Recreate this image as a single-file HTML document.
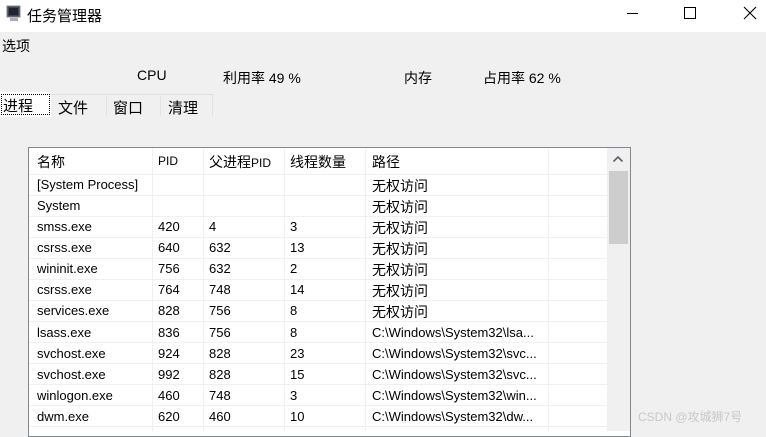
<!DOCTYPE html>
<html><head><meta charset="utf-8"><style>
*{margin:0;padding:0;box-sizing:border-box}
body{width:766px;height:431px;overflow:hidden;background:#f0f0f0;position:relative;font-family:"Liberation Sans","Noto Sans CJK SC",sans-serif;color:#000}
.a{position:absolute;white-space:nowrap}
#title{left:0;top:0;width:766px;height:32px;background:#fff}
.cell{position:absolute;font-size:13px;white-space:nowrap}
.hl{position:absolute;height:1px;background:#f0f0f0;left:29px;width:578px}
.vl{position:absolute;width:1px;background:#f0f0f0;top:148px;height:283px}
</style></head><body>
<div class="a" id="title"></div>
<svg class="a" style="left:6px;top:5px" width="16" height="18" viewBox="0 0 16 18"><rect x="1" y="1" width="13" height="11" fill="#3a4a55" stroke="#888"/><rect x="3" y="3" width="9" height="7" fill="#223"/><rect x="4" y="13" width="8" height="3" fill="#aab"/></svg>
<div class="a" style="left:27px;top:5px;font-size:15px">任务管理器</div>
<div class="a" style="left:627px;top:13px;width:11px;height:1px;background:#000"></div>
<div class="a" style="left:684px;top:7px;width:12px;height:12px;border:1px solid #000"></div>
<svg class="a" style="left:743px;top:6px" width="14" height="14"><path d="M1 1L13 13M13 1L1 13" stroke="#000" stroke-width="1.1"/></svg>
<div class="a" style="left:2px;top:36px;font-size:14px">选项</div>
<div class="a" style="left:137px;top:67px;font-size:14px">CPU</div>
<div class="a" style="left:223px;top:68px;font-size:14px">利用率 49 %</div>
<div class="a" style="left:404px;top:68px;font-size:14px">内存</div>
<div class="a" style="left:483px;top:68px;font-size:14px">占用率 62 %</div>
<div class="a" style="left:51px;top:94px;width:162px;height:22px;border-top:1px solid #e0e0e0;border-right:1px solid #e0e0e0"></div>
<div class="a" style="left:106px;top:96px;width:1px;height:20px;background:#e3e3e3"></div>
<div class="a" style="left:160px;top:96px;width:1px;height:20px;background:#e3e3e3"></div>
<div class="a" style="left:0;top:92px;width:51px;height:25px;background:#fff"></div>
<div class="a" style="left:1px;top:94px;width:49px;height:21px;border:1px dotted #000"></div>
<div class="a" style="left:3px;top:95px;font-size:15px">进程</div>
<div class="a" style="left:58px;top:97px;font-size:15px">文件</div>
<div class="a" style="left:113px;top:97px;font-size:15px">窗口</div>
<div class="a" style="left:168px;top:97px;font-size:15px">清理</div>
<div class="a" style="left:28px;top:147px;width:603px;height:290px;border:1px solid #828790;background:#fff"></div>
<div class="a" style="left:607px;top:148px;width:23px;height:283px;background:#f0f0f0"></div>
<div class="a" style="left:609px;top:171px;width:19px;height:73px;background:#cdcdcd"></div>
<svg class="a" style="left:612px;top:155px" width="12" height="8"><path d="M1.5 6.5L6 2L10.5 6.5" stroke="#606060" stroke-width="1.6" fill="none"/></svg>
<div class="vl" style="left:152px"></div><div class="vl" style="left:203px"></div><div class="vl" style="left:284px"></div><div class="vl" style="left:365px"></div><div class="vl" style="left:548px"></div>
<div class="hl" style="top:174px"></div><div class="hl" style="top:195px"></div><div class="hl" style="top:216px"></div><div class="hl" style="top:237px"></div><div class="hl" style="top:258px"></div><div class="hl" style="top:279px"></div><div class="hl" style="top:300px"></div><div class="hl" style="top:321px"></div><div class="hl" style="top:342px"></div><div class="hl" style="top:363px"></div><div class="hl" style="top:384px"></div><div class="hl" style="top:405px"></div><div class="hl" style="top:426px"></div>
<div class="cell" style="left:37px;top:152px;font-size:14px">名称</div>
<div class="cell" style="left:158px;top:154px;font-size:12px">PID</div>
<div class="cell" style="left:209px;top:152px;font-size:14px">父进程<span style="font-size:12px">PID</span></div>
<div class="cell" style="left:290px;top:152px;font-size:14px">线程数量</div>
<div class="cell" style="left:372px;top:152px;font-size:14px">路径</div>
<div id="rows"></div>
<script></script>
<div class="cell" style="left:37px;top:177px">[System Process]</div><div class="cell" style="left:372px;top:176px;font-size:14px">无权访问</div>
<div class="cell" style="left:37px;top:198px">System</div><div class="cell" style="left:372px;top:197px;font-size:14px">无权访问</div>
<div class="cell" style="left:37px;top:219px">smss.exe</div><div class="cell" style="left:158px;top:219px">420</div><div class="cell" style="left:209px;top:219px">4</div><div class="cell" style="left:290px;top:219px">3</div><div class="cell" style="left:372px;top:218px;font-size:14px">无权访问</div>
<div class="cell" style="left:37px;top:240px">csrss.exe</div><div class="cell" style="left:158px;top:240px">640</div><div class="cell" style="left:209px;top:240px">632</div><div class="cell" style="left:290px;top:240px">13</div><div class="cell" style="left:372px;top:239px;font-size:14px">无权访问</div>
<div class="cell" style="left:37px;top:261px">wininit.exe</div><div class="cell" style="left:158px;top:261px">756</div><div class="cell" style="left:209px;top:261px">632</div><div class="cell" style="left:290px;top:261px">2</div><div class="cell" style="left:372px;top:260px;font-size:14px">无权访问</div>
<div class="cell" style="left:37px;top:282px">csrss.exe</div><div class="cell" style="left:158px;top:282px">764</div><div class="cell" style="left:209px;top:282px">748</div><div class="cell" style="left:290px;top:282px">14</div><div class="cell" style="left:372px;top:281px;font-size:14px">无权访问</div>
<div class="cell" style="left:37px;top:303px">services.exe</div><div class="cell" style="left:158px;top:303px">828</div><div class="cell" style="left:209px;top:303px">756</div><div class="cell" style="left:290px;top:303px">8</div><div class="cell" style="left:372px;top:302px;font-size:14px">无权访问</div>
<div class="cell" style="left:37px;top:325px">lsass.exe</div><div class="cell" style="left:158px;top:325px">836</div><div class="cell" style="left:209px;top:325px">756</div><div class="cell" style="left:290px;top:325px">8</div><div class="cell" style="left:372px;top:325px">C:\Windows\System32\lsa...</div>
<div class="cell" style="left:37px;top:346px">svchost.exe</div><div class="cell" style="left:158px;top:346px">924</div><div class="cell" style="left:209px;top:346px">828</div><div class="cell" style="left:290px;top:346px">23</div><div class="cell" style="left:372px;top:346px">C:\Windows\System32\svc...</div>
<div class="cell" style="left:37px;top:367px">svchost.exe</div><div class="cell" style="left:158px;top:367px">992</div><div class="cell" style="left:209px;top:367px">828</div><div class="cell" style="left:290px;top:367px">15</div><div class="cell" style="left:372px;top:367px">C:\Windows\System32\svc...</div>
<div class="cell" style="left:37px;top:388px">winlogon.exe</div><div class="cell" style="left:158px;top:388px">460</div><div class="cell" style="left:209px;top:388px">748</div><div class="cell" style="left:290px;top:388px">3</div><div class="cell" style="left:372px;top:388px">C:\Windows\System32\win...</div>
<div class="cell" style="left:37px;top:409px">dwm.exe</div><div class="cell" style="left:158px;top:409px">620</div><div class="cell" style="left:209px;top:409px">460</div><div class="cell" style="left:290px;top:409px">10</div><div class="cell" style="left:372px;top:409px">C:\Windows\System32\dw...</div>
<div class="a" style="left:638px;top:408px;font-size:12px;color:#c8c8c8">CSDN @攻城狮7号</div>
</body></html>
